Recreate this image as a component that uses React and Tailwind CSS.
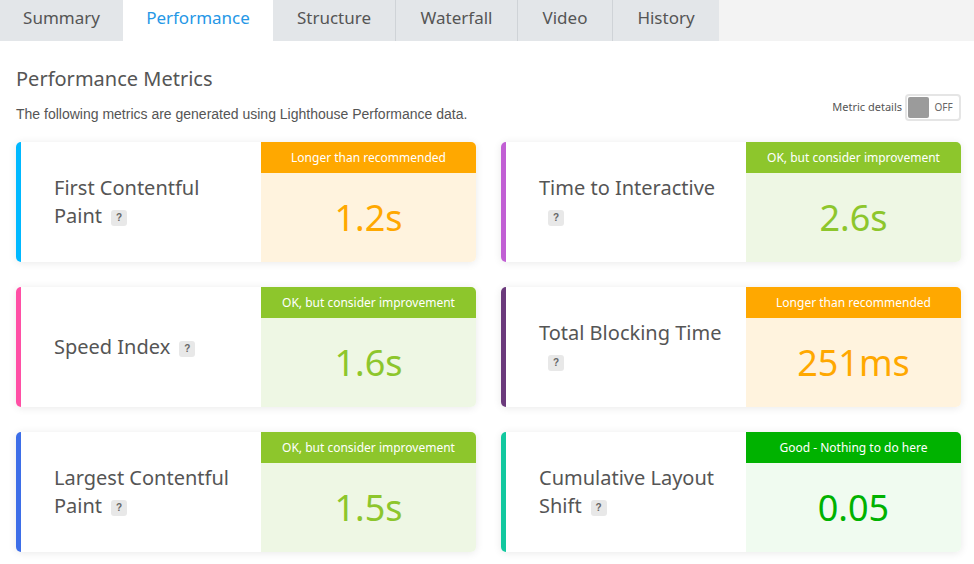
import React from 'react'

const tabs = ['Summary', 'Performance', 'Structure', 'Waterfall', 'Video', 'History']
const tabWidths = ['w-[123px]', 'w-[150px]', 'w-[122px]', 'w-[122px]', 'w-[95px]', 'w-[107px]']

const metrics = [
    { name: ['First Contentful', 'Paint'], value: '1.2s', status: 'warn', bar: 'bg-[#00b8ff]' },
    { name: ['Time to Interactive', ''], value: '2.6s', status: 'ok', bar: 'bg-[#c15fd4]' },
    { name: ['Speed Index'], value: '1.6s', status: 'ok', bar: 'bg-[#ff4fa5]' },
    { name: ['Total Blocking Time', ''], value: '251ms', status: 'warn', bar: 'bg-[#6b3a7c]' },
    { name: ['Largest Contentful', 'Paint'], value: '1.5s', status: 'ok', bar: 'bg-[#3d6ee8]' },
    { name: ['Cumulative Layout', 'Shift'], value: '0.05', status: 'good', bar: 'bg-[#12c89f]' },
]

const statusStyles = {
    warn: { label: 'Longer than recommended', head: 'bg-[#ffa800]', body: 'bg-[#fff3de]', text: 'text-[#ffa800]' },
    ok: { label: 'OK, but consider improvement', head: 'bg-[#8dc62c]', body: 'bg-[#eef7e4]', text: 'text-[#8dc62c]' },
    good: { label: 'Good - Nothing to do here', head: 'bg-[#00b200]', body: 'bg-[#f0fbf0]', text: 'text-[#00b200]' },
}

function Help() {
    return (
        <span className="inline-flex items-center justify-center w-[16px] h-[16px] ml-[9px] rounded-[3px] bg-[#e8e8e8] text-[#666] text-[10px] font-bold align-middle font-['Liberation_Sans',sans-serif]">?</span>
    )
}

function MetricCard({ m }) {
    const s = statusStyles[m.status]
    const lines = m.name
    return (
        <div className="flex h-[120px] rounded-[5px] bg-white shadow-[0_1px_8px_rgba(0,0,0,0.09)] overflow-hidden">
            <div className={`w-[5px] ${m.bar}`} />
            <div className="flex-1 flex flex-col justify-center pl-[33px] text-[20px] leading-[28px] text-[#555]">
                {lines.length === 1 ? (
                    <div>{lines[0]}<Help /></div>
                ) : (
                    <>
                        <div>{lines[0]}</div>
                        <div>{lines[1]}<Help /></div>
                    </>
                )}
            </div>
            <div className="w-[215px] flex flex-col">
                <div className={`h-[31px] flex items-center justify-center text-white text-[12px] ${s.head}`}>{s.label}</div>
                <div className={`flex-1 flex items-center justify-center text-[36px] ${s.body} ${s.text}`}>{m.value}</div>
            </div>
        </div>
    )
}

export default function App() {
    return (
        <div className="w-[974px] h-[564px] bg-white font-['Noto_Sans',sans-serif] overflow-hidden">
            <div className="flex h-[41px] bg-[#f2f2f2]">
                {tabs.map((t, i) => (
                    <div
                        key={t}
                        className={`${tabWidths[i]} flex items-center justify-center pb-[5px] text-[17px] ${t === 'Performance' ? 'bg-white text-[#2597e6]' : 'bg-[#e3e6e9] text-[#555]'} ${i >= 3 ? 'border-l border-[#cfd3d7]' : ''}`}
                    >
                        {t}
                    </div>
                ))}
                <div className="flex-1 bg-[#f3f3f3]" />
            </div>

            <div className="px-[16px] pr-[13px]">
                <h1 className="mt-[24px] text-[20px] leading-[28px] text-[#555]">Performance Metrics</h1>
                <div className="flex items-start justify-between mt-[1px]">
                    <p className="pt-[12px] text-[14px] leading-[16px] text-[#555] font-['Liberation_Sans',sans-serif]">The following metrics are generated using Lighthouse Performance data.</p>
                    <div className="flex items-center gap-[3px]">
                        <span className="text-[11px] text-[#555]">Metric details</span>
                        <div className="flex items-center w-[56px] h-[27px] rounded-[4px] border-2 border-[#e5e5e5] p-[1px]">
                            <div className="w-[21px] h-[21px] bg-[#9b9b9b] rounded-[2px]" />
                            <span className="flex-1 text-center text-[10px] text-[#666]">OFF</span>
                        </div>
                    </div>
                </div>

                <div className="grid grid-cols-2 gap-x-[25px] gap-y-[25px] mt-[20px]">
                    {metrics.map((m, i) => (
                        <MetricCard key={i} m={m} />
                    ))}
                </div>
            </div>
        </div>
    )
}
